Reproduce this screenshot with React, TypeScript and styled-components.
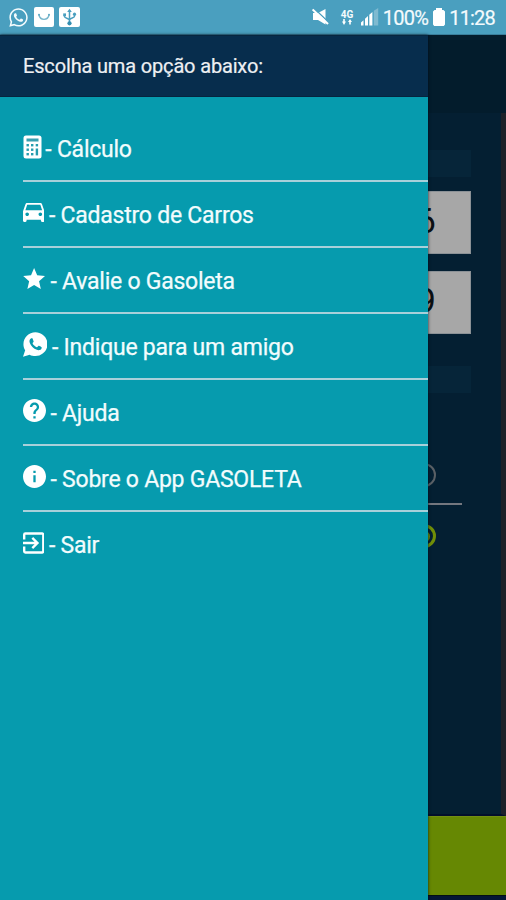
import React from 'react';
import styled, { createGlobalStyle } from 'styled-components';
import { MdDirectionsCar, MdStar, MdHelp, MdInfo, MdExitToApp } from 'react-icons/md';
import { IoLogoWhatsapp } from 'react-icons/io';
import { FaWhatsapp } from 'react-icons/fa';

const GlobalStyle = createGlobalStyle`
  *, *::before, *::after { box-sizing: border-box; }
  body { margin: 0; background: #041d30; }
`;

const Screen = styled.div`
  width: 506px;
  height: 900px;
  display: flex;
  flex-direction: column;
  overflow: hidden;
  font-family: Roboto, sans-serif;
  background: #041f32;
`;

const StatusBar = styled.header`
  height: 35px;
  flex: none;
  display: flex;
  justify-content: space-between;
  align-items: center;
  padding: 0 11px 0 8px;
  background: #4a9fbf;
  border-bottom: 1px solid #3a7f9c;
  color: #f4fbfd;
`;

const Notifications = styled.div`
  display: flex;
  align-items: center;
  gap: 5px;
  svg { display: block; }
`;

const Indicators = styled.div`
  display: flex;
  align-items: center;
  height: 100%;
  svg { display: block; flex: none; }
`;

const StatusText = styled.span<{ $width: number }>`
  width: ${p => p.$width}px;
  font-size: 20px;
  line-height: 34px;
  letter-spacing: -0.8px;
  white-space: nowrap;
  padding-top: 2px;
  text-align: right;
  -webkit-text-stroke: 0.2px currentColor;
`;

const Spacer = styled.span`
  width: 5px;
`;

const Network = styled.div`
  width: 16px;
  margin: 0 5px 0 10px;
  display: flex;
  flex-direction: column;
  align-items: center;
  font-size: 10px;
  font-weight: 700;
  line-height: 9px;
`;

const Body = styled.div`
  position: relative;
  flex: 1;
  min-height: 0;
`;

const Page = styled.main`
  height: 100%;
  display: flex;
  flex-direction: column;
`;

const PageHeader = styled.div`
  height: 78px;
  flex: none;
  background: #031c2c;
`;

const PageContent = styled.div`
  height: 703px;
  flex: none;
  display: flex;
  flex-direction: column;
  align-items: flex-end;
  padding: 37px 30px 0 0;
  background: #041f32;
  border-right: 5px solid #1d2229;
  border-bottom: 2px solid #020f2b;
`;

const Label = styled.div<{ $top?: number }>`
  width: 400px;
  height: 27px;
  margin-top: ${p => p.$top ?? 0}px;
  background: #062539;
`;

const Field = styled.div<{ $top: number }>`
  width: 100px;
  height: 63px;
  margin-top: ${p => p.$top}px;
  padding-right: 34px;
  background: #a7a7a7;
  border: 1px solid #8b9196;
  color: #0c1013;
  font-size: 35px;
  line-height: 60px;
  text-align: right;
`;

const Option = styled.div<{ $top: number; $height: number; $line?: boolean }>`
  width: 400px;
  height: ${p => p.$height}px;
  margin: ${p => p.$top}px 9px 0 0;
  padding-right: 26px;
  display: flex;
  justify-content: flex-end;
  align-items: flex-start;
  border-bottom: ${p => (p.$line ? '2px solid #74777f' : '0')};
`;

const Radio = styled.span<{ $on?: boolean }>`
  width: 24px;
  height: 24px;
  display: grid;
  place-items: center;
  border: ${p => (p.$on ? '3px solid #718f08' : '2px solid #5a6066')};
  border-radius: 50%;
  &::after {
    content: '';
    width: 11px;
    height: 11px;
    border-radius: 50%;
    background: ${p => (p.$on ? '#718f08' : 'transparent')};
  }
`;

const ActionBar = styled.div`
  height: 79px;
  flex: none;
  background: #668803;
  border-top: 1px solid #738f12;
`;

const BottomEdge = styled.div`
  flex: 1;
  background: #041635;
  border-top: 1px solid #020e16;
`;

const Drawer = styled.aside`
  position: absolute;
  inset: 0 auto 0 0;
  width: 428px;
  display: flex;
  flex-direction: column;
  background: #069bae;
  box-shadow: 0 0 3px rgba(0, 8, 20, 0.8);
`;

const DrawerTitle = styled.h1`
  height: 62px;
  flex: none;
  margin: 0;
  padding: 0 23px;
  background: #072d4d;
  border-top: 1px solid #07263f;
  border-bottom: 1px solid #06243f;
  color: #eef0f3;
  font-size: 20px;
  font-weight: 400;
  line-height: 60px;
  letter-spacing: -0.16px;
  -webkit-text-stroke: 0.2px currentColor;
  white-space: nowrap;
`;

const Menu = styled.nav`
  display: flex;
  flex-direction: column;
  padding: 19px 0 0 22.5px;
`;

const MenuItem = styled.a`
  height: 66px;
  display: flex;
  align-items: center;
  padding-top: 4px;
  border-bottom: 2px solid #a8d0da;
  color: #f2fcfd;
  &:last-child { border-bottom-color: transparent; }
`;

const IconSlot = styled.span<{ $slot: number; $width: number; $height: number }>`
  width: ${p => p.$slot}px;
  flex: none;
  margin-top: -7px;
  color: #fff;
  svg {
    display: block;
    width: ${p => p.$width}px;
    height: ${p => p.$height}px;
  }
`;

const ItemText = styled.span`
  font-size: 23px;
  line-height: 30px;
  white-space: nowrap;
  letter-spacing: -0.24px;
  -webkit-text-stroke: 0.25px currentColor;
`;

const CalculatorIcon = () => (
  <svg viewBox="0 0 19 24">
    <rect x="0.5" y="0.5" width="18" height="23" rx="2.5" fill="#fff" />
    <rect x="3.5" y="3.5" width="12" height="3" fill="#399fb0" />
    <g fill="#259cae">
      {[9, 13.5, 18].map(y =>
        [3.5, 8, 12.7].map(x =>
          x > 12 && y > 13 ? null : <rect key={`${x}-${y}`} x={x} y={y} width="2.4" height="2.4" />
        )
      )}
      <rect x="12.7" y="13.5" width="2.4" height="6.9" />
    </g>
  </svg>
);

const MailBadgeIcon = () => (
  <svg width="20" height="20" viewBox="0 0 20 20">
    <rect width="20" height="20" rx="2" fill="#fff" />
    <path d="M5 8c1.2 5.8 8.8 5.8 10 0" fill="none" stroke="#79b7cd" strokeWidth="1.4" />
    <circle cx="5" cy="7.8" r="1" fill="#5ba8c3" />
    <circle cx="15" cy="7.8" r="1" fill="#5ba8c3" />
  </svg>
);

const UsbIcon = () => (
  <svg width="21" height="20" viewBox="0 0 21 20">
    <rect width="21" height="20" rx="2" fill="#fff" />
    <g fill="none" stroke="#4a9fbf" strokeWidth="1.5">
      <path d="M10.5 3v13M5.5 8v1.5c0 2 5 1.5 5 4M15.5 7v2.2c0 2-5 1.5-5 4" />
    </g>
    <path d="M8.2 5 10.5 1.8 12.8 5z" fill="#4a9fbf" />
    <rect x="4.2" y="6.4" width="2.8" height="2.8" fill="#4a9fbf" />
    <circle cx="15.5" cy="7.2" r="1.6" fill="#4a9fbf" />
    <circle cx="10.5" cy="16.3" r="2.1" fill="#348eb1" />
  </svg>
);

const MutedIcon = () => (
  <svg width="17" height="18" viewBox="0 0 17 18">
    <path d="M1 5h5L13.5 1v15.5L6 12H1z" fill="#fff" />
    <path d="M2.4.8 16.4 14" stroke="#4a9fbf" strokeWidth="1.3" />
    <path d="M.6 1.4 16 16" stroke="#fff" strokeWidth="2.1" />
  </svg>
);

const SignalIcon = () => (
  <svg width="19" height="18" viewBox="0 0 19 18">
    <path d="M1 17.5v-3l2.5-2.3v5.3zM5 17.5v-6.7l3-2.8v9.5zM9.3 17.5V6.8L12.4 4v13.5z" fill="#fff" />
    <path d="M13.8 17.5V2.8L18.2 0v17.5z" fill="#7fbad0" />
  </svg>
);

const BatteryIcon = () => (
  <svg width="12" height="18" viewBox="0 0 12 18">
    <path d="M3 0h6v2h1.5L12 3.5v13L10.8 18H1.2L0 16.5v-13L1.5 2H3z" fill="#fff" />
  </svg>
);

const ArrowsIcon = () => (
  <svg width="12" height="6" viewBox="0 0 12 6">
    <path d="M1 2.5h1.2V0h1.6v2.5H5L3 6zM7 3l2-3 2 3H9.8v2.6H8.2V3z" fill="#fff" />
  </svg>
);

const items = [
  { label: '- Cálculo', slot: 22.8, width: 19, height: 24, icon: <CalculatorIcon /> },
  { label: '- Cadastro de Carros', slot: 26.5, width: 21.5, height: 19, icon: <MdDirectionsCar viewBox="3 5 18 16" preserveAspectRatio="none" /> },
  { label: '- Avalie o Gasoleta', slot: 28, width: 22, height: 21, icon: <MdStar viewBox="1.8 2 20.2 19" preserveAspectRatio="none" /> },
  { label: '- Indique para um amigo', slot: 29.5, width: 24.5, height: 25, icon: <IoLogoWhatsapp viewBox="32 32 448 448" /> },
  { label: '- Ajuda', slot: 28, width: 23, height: 23, icon: <MdHelp viewBox="2 2 20 20" /> },
  { label: '- Sobre o App GASOLETA', slot: 28, width: 23, height: 23, icon: <MdInfo viewBox="2 2 20 20" /> },
  { label: '- Sair', slot: 26.5, width: 21.5, height: 22, icon: <MdExitToApp viewBox="3 3 18 18" /> },
];

export default function App() {
  return (
    <>
      <GlobalStyle />
      <Screen>
        <StatusBar>
          <Notifications>
            <FaWhatsapp size={21} />
            <MailBadgeIcon />
            <UsbIcon />
          </Notifications>
          <Indicators>
            <MutedIcon />
            <Network>
              <span>4G</span>
              <ArrowsIcon />
            </Network>
            <SignalIcon />
            <StatusText $width={49}>100%</StatusText>
            <Spacer />
            <BatteryIcon />
            <StatusText $width={50}>11:28</StatusText>
          </Indicators>
        </StatusBar>
        <Body>
          <Page>
            <PageHeader />
            <PageContent>
              <Label />
              <Field $top={14}>6</Field>
              <Field $top={17}>9</Field>
              <Label $top={32} />
              <Option $top={70} $height={42} $line><Radio /></Option>
              <Option $top={19} $height={24}><Radio $on /></Option>
            </PageContent>
            <ActionBar />
            <BottomEdge />
          </Page>
          <Drawer>
            <DrawerTitle>Escolha uma opção abaixo:</DrawerTitle>
            <Menu>
              {items.map(item => (
                <MenuItem key={item.label}>
                  <IconSlot $slot={item.slot} $width={item.width} $height={item.height}>
                    {item.icon}
                  </IconSlot>
                  <ItemText>{item.label}</ItemText>
                </MenuItem>
              ))}
            </Menu>
          </Drawer>
        </Body>
      </Screen>
    </>
  );
}
